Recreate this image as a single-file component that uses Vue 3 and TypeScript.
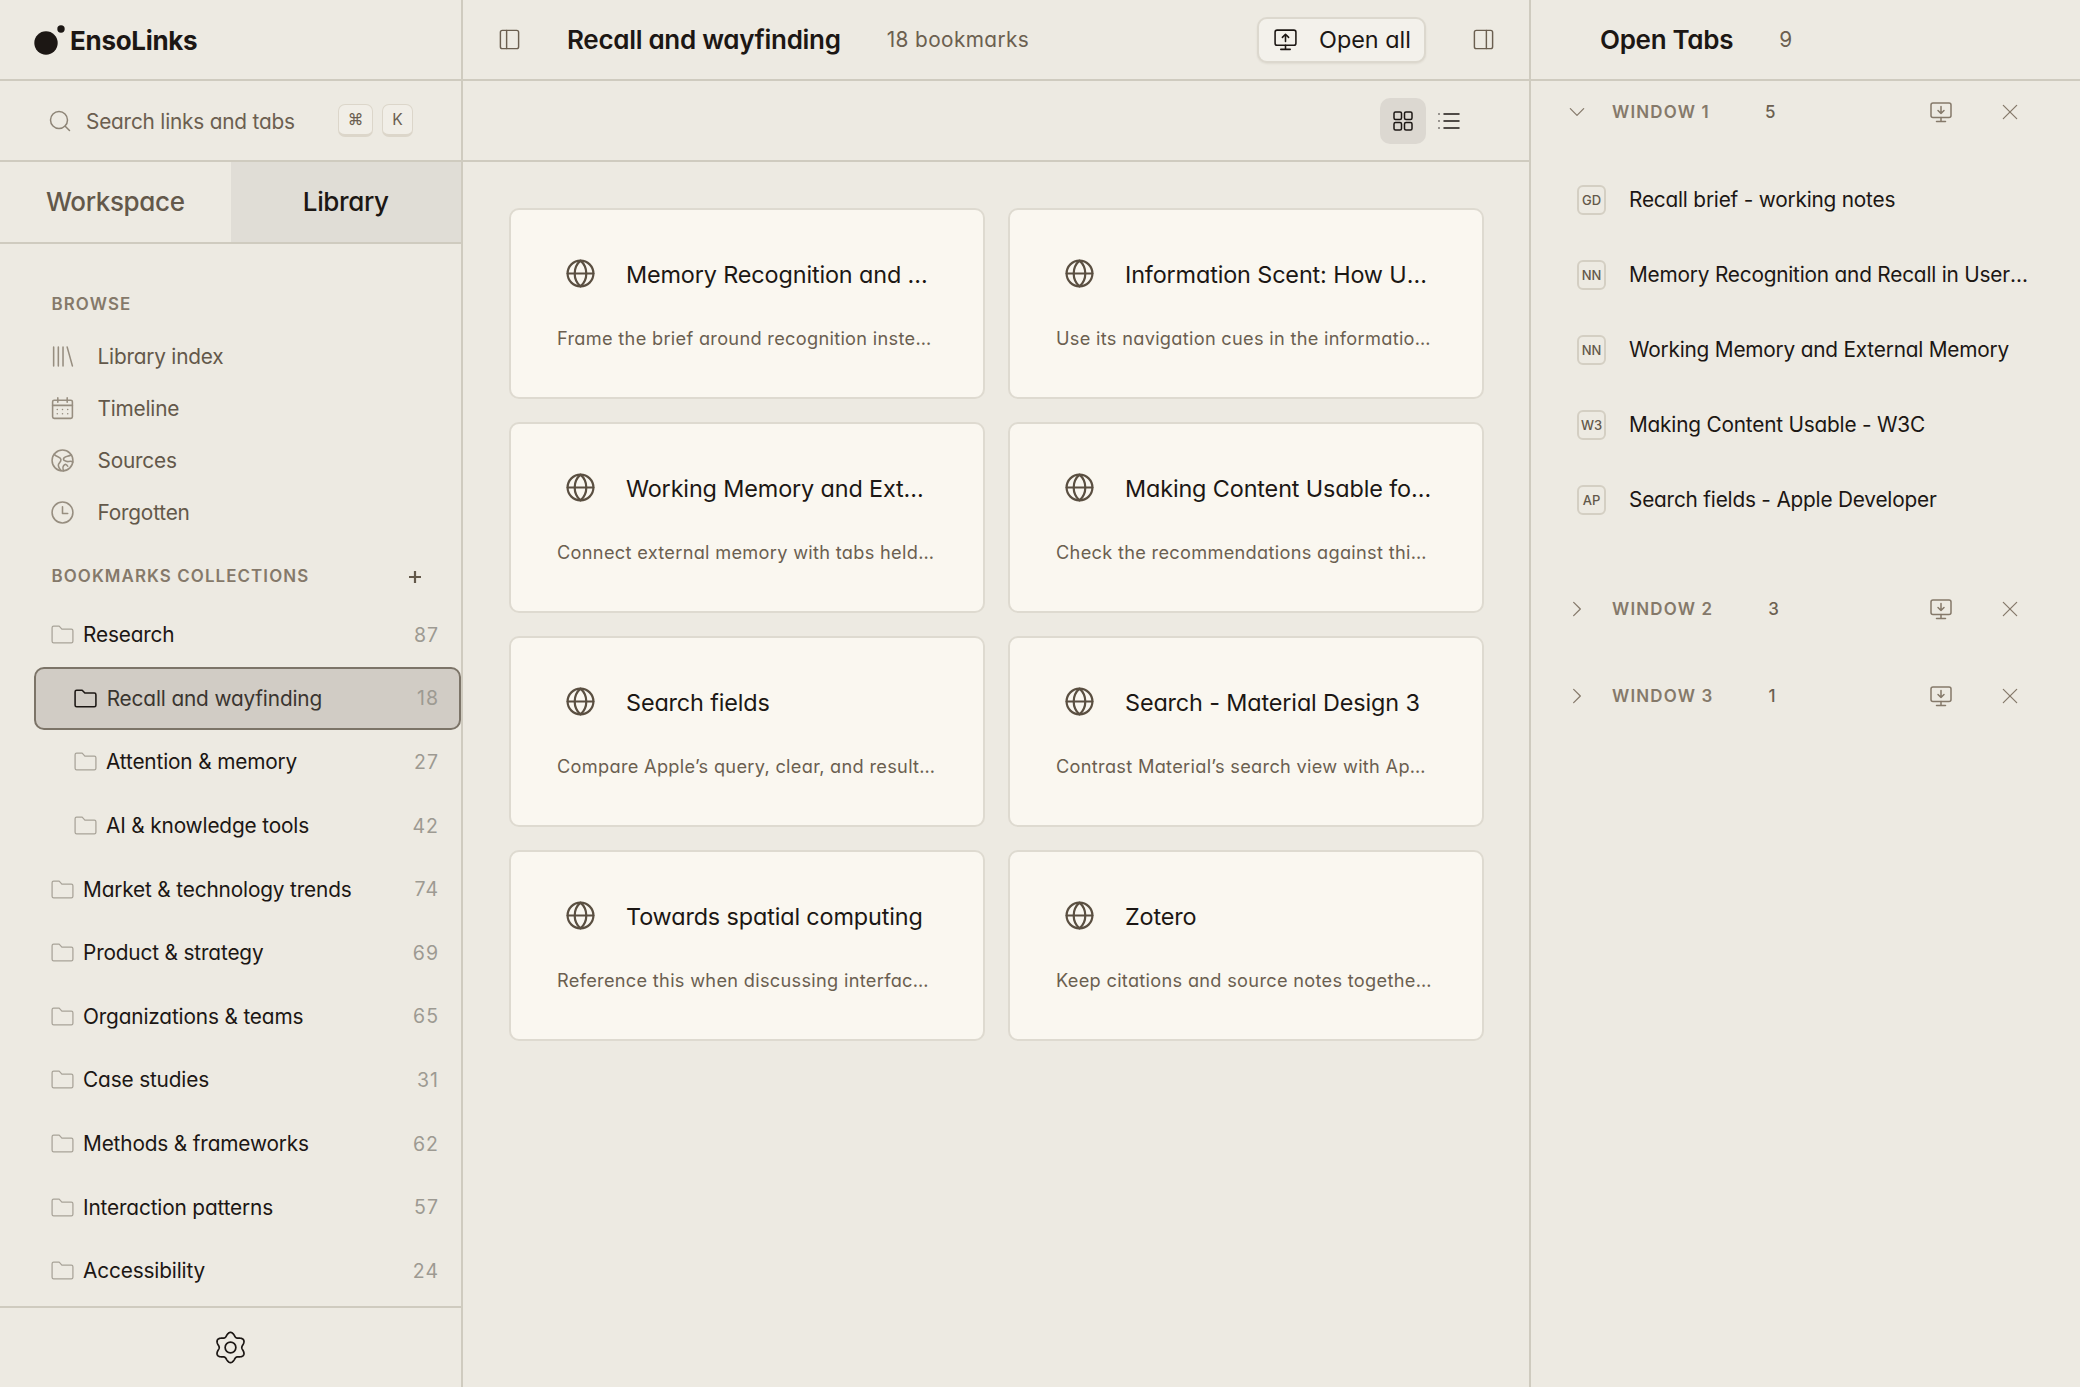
<template>
  <svg class="defs" width="0" height="0" aria-hidden="true">
    <symbol id="i-search" viewBox="0 0 24 24"><circle cx="11" cy="11" r="8.5" /><path d="M17.2 17.2 21.5 21.5" /></symbol>
    <symbol id="i-books" viewBox="0 0 24 24"><path d="M3.500 3v18M8 3v18M12.500 3v18M16.500 3l5 18" /></symbol>
    <symbol id="i-cal" viewBox="0 0 24 24"><rect x="2.5" y="4" width="19" height="17.5" rx="1.5" /><path d="M2.5 9h19M7.5 1.8V6M16.5 1.8V6" /><path d="M7 13h.01M12 13h.01M17 13h.01M7 17h.01M12 17h.01M17 17h.01" stroke-width="1.5" /></symbol>
    <symbol id="i-earth" viewBox="0 0 24 24"><circle cx="12" cy="12" r="10" /><path d="M4 6c2 3 6 2 6.500 5s-3 3-2.500 6 2 3.500 2.500 4.500M20.500 6.500c-3 2-5 1-7 3s2 4 4.500 3.500 3.500 0 4 .5M13 22c-.5-2-1.500-3 0-5s3-1.500 4 .5" /></symbol>
    <symbol id="i-clock" viewBox="0 0 24 24"><circle cx="12" cy="12" r="10" /><path d="M12 6.500V13h5" /></symbol>
    <symbol id="i-folder" viewBox="0 0 24 24"><path d="M2 5.500A1.500 1.500 0 0 1 3.500 4h5.300l2.600 2.800h9.100A1.500 1.500 0 0 1 22 8.300v10.200a1.500 1.500 0 0 1-1.500 1.500h-17A1.500 1.500 0 0 1 2 18.500z" /></symbol>
    <symbol id="i-gear" viewBox="0 0 24 24"><circle cx="12" cy="12" r="3.900" /><path :d="gearPath" /></symbol>
    <symbol id="i-panel-l" viewBox="0 0 24 24"><rect x="2.500" y="2.500" width="19" height="19" rx="2" /><path d="M9 2.500v19" /></symbol>
    <symbol id="i-panel-r" viewBox="0 0 24 24"><rect x="2.500" y="2.500" width="19" height="19" rx="2" /><path d="M15 2.500v19" /></symbol>
    <symbol id="i-up" viewBox="0 0 24 24"><rect x="2" y="3" width="20" height="14.500" rx="2" /><path d="M12 21.500v-4M7.500 21.500h9M12 14V7M9 10l3-3 3 3" /></symbol>
    <symbol id="i-down" viewBox="0 0 24 24"><rect x="2" y="3" width="20" height="14.500" rx="2" /><path d="M12 21.500v-4M7.500 21.500h9M12 6.500v7M9 10.500l3 3 3-3" /></symbol>
    <symbol id="i-grid" viewBox="0 0 24 24"><rect x="3" y="3" width="7.500" height="7.500" rx="1.500" /><rect x="13.500" y="3" width="7.500" height="7.500" rx="1.500" /><rect x="3" y="13.500" width="7.500" height="7.500" rx="1.500" /><rect x="13.500" y="13.500" width="7.500" height="7.500" rx="1.500" /></symbol>
    <symbol id="i-list" viewBox="0 0 24 24"><path d="M7 5h15M7 12h15M7 19h15M2 5h.01M2 12h.01M2 19h.01" /></symbol>
    <symbol id="i-globe" viewBox="0 0 24 24"><circle cx="12" cy="12" r="10" /><path d="M2 12h20M12 2c3.500 3 4.500 6.500 4.500 10s-1 7-4.500 10c-3.500-3-4.500-6.500-4.500-10S8.500 5 12 2z" /></symbol>
    <symbol id="i-x" viewBox="0 0 24 24"><path d="M4 4l16 16M20 4 4 20" /></symbol>
    <symbol id="i-chev-d" viewBox="0 0 24 24"><path d="M4 8l8 8 8-8" /></symbol>
    <symbol id="i-chev-r" viewBox="0 0 24 24"><path d="M8 4l8 8-8 8" /></symbol>
  </svg>

  <div class="app">
    <aside class="side">
      <div class="brand">
        <svg class="logo" viewBox="0 0 32 32"><circle cx="13" cy="19" r="11.700" /><circle cx="28" cy="5" r="3.700" /></svg>
        <span>EnsoLinks</span>
      </div>
      <div class="search">
        <svg class="ic search-ic"><use href="#i-search" /></svg>
        <span class="search-text">Search links and tabs</span>
        <kbd class="key key-cmd">⌘</kbd>
        <kbd class="key">K</kbd>
      </div>
      <div class="tabs">
        <div class="tab">Workspace</div>
        <div class="tab tab-on">Library</div>
      </div>
      <div class="side-body">
        <div class="label browse">BROWSE</div>
        <div v-for="b in browse" :key="b.name" class="browse-row">
          <svg class="ic browse-ic"><use :href="b.icon" /></svg>
          <span>{{ b.name }}</span>
        </div>
        <div class="label coll-head">
          <span>BOOKMARKS COLLECTIONS</span>
          <svg class="plus" viewBox="0 0 14 14"><path d="M7 1v12M1 7h12" /></svg>
        </div>
        <div
          v-for="c in collections"
          :key="c.name"
          class="coll"
          :class="{ 'coll-sub': c.sub, 'coll-on': c.on }"
        >
          <svg class="ic folder"><use href="#i-folder" /></svg>
          <span class="coll-name">{{ c.name }}</span>
          <span class="coll-n">{{ c.n }}</span>
        </div>
      </div>
      <div class="side-foot">
        <svg class="ic gear"><use href="#i-gear" /></svg>
      </div>
    </aside>

    <main class="main">
      <header class="main-head">
        <svg class="ic panel"><use href="#i-panel-l" /></svg>
        <h1 class="title">Recall and wayfinding</h1>
        <span class="count">18 bookmarks</span>
        <button class="open-all">
          <svg class="ic open-ic"><use href="#i-up" /></svg>
          <span>Open all</span>
        </button>
        <svg class="ic panel panel-r"><use href="#i-panel-r" /></svg>
      </header>
      <div class="toolbar">
        <button class="view view-on"><svg class="ic view-ic"><use href="#i-grid" /></svg></button>
        <button class="view"><svg class="ic view-ic"><use href="#i-list" /></svg></button>
      </div>
      <div class="cards">
        <article v-for="c in cards" :key="c.title" class="card">
          <div class="card-top">
            <svg class="ic globe"><use href="#i-globe" /></svg>
            <div class="card-title">{{ c.title }}</div>
          </div>
          <div class="card-desc">{{ c.desc }}</div>
        </article>
      </div>
    </main>

    <aside class="right">
      <header class="right-head">
        <h2 class="right-title">Open Tabs</h2>
        <span class="right-n">9</span>
      </header>
      <section v-for="w in windows" :key="w.name" class="win">
        <div class="win-head">
          <svg class="ic chev"><use :href="w.tabs.length ? '#i-chev-d' : '#i-chev-r'" /></svg>
          <span class="win-name">{{ w.name }}</span>
          <span class="win-n">{{ w.n }}</span>
          <svg class="ic win-dl"><use href="#i-down" /></svg>
          <svg class="ic win-x"><use href="#i-x" /></svg>
        </div>
        <div v-if="w.tabs.length" class="win-tabs">
          <div v-for="t in w.tabs" :key="t.title" class="win-tab">
            <span class="badge">{{ t.badge }}</span>
            <span class="win-tab-title">{{ t.title }}</span>
          </div>
        </div>
      </section>
    </aside>
  </div>
</template>

<script setup lang="ts">
// six round lobes around the centre, one pointing straight up
const gearPath = Array.from({ length: 144 }, (_, i) => {
  const a = (i / 144) * Math.PI * 2
  const r = 9.6 + 1.4 * Math.cos(6 * a)
  const x = 12 + r * Math.sin(a)
  const y = 12 - r * Math.cos(a)
  return `${i ? 'L' : 'M'}${x.toFixed(2)} ${y.toFixed(2)}`
}).join('') + 'Z'

const browse = [
  { name: 'Library index', icon: '#i-books' },
  { name: 'Timeline', icon: '#i-cal' },
  { name: 'Sources', icon: '#i-earth' },
  { name: 'Forgotten', icon: '#i-clock' },
]

const collections = [
  { name: 'Research', n: 87 },
  { name: 'Recall and wayfinding', n: 18, sub: true, on: true },
  { name: 'Attention & memory', n: 27, sub: true },
  { name: 'AI & knowledge tools', n: 42, sub: true },
  { name: 'Market & technology trends', n: 74 },
  { name: 'Product & strategy', n: 69 },
  { name: 'Organizations & teams', n: 65 },
  { name: 'Case studies', n: 31 },
  { name: 'Methods & frameworks', n: 62 },
  { name: 'Interaction patterns', n: 57 },
  { name: 'Accessibility', n: 24 },
]

const cards = [
  { title: 'Memory Recognition and Recall in User Interfaces', desc: 'Frame the brief around recognition instead of recall.' },
  { title: 'Information Scent: How Users Decide', desc: 'Use its navigation cues in the information architecture.' },
  { title: 'Working Memory and External Memory', desc: 'Connect external memory with tabs held open by readers.' },
  { title: 'Making Content Usable for People', desc: 'Check the recommendations against this reference list.' },
  { title: 'Search fields', desc: 'Compare Apple’s query, clear, and results behaviours here.' },
  { title: 'Search - Material Design 3', desc: 'Contrast Material’s search view with Apple’s search fields.' },
  { title: 'Towards spatial computing', desc: 'Reference this when discussing interface futures and space.' },
  { title: 'Zotero', desc: 'Keep citations and source notes together in one library.' },
]

const windows = [
  {
    name: 'WINDOW 1',
    n: 5,
    tabs: [
      { badge: 'GD', title: 'Recall brief - working notes' },
      { badge: 'NN', title: 'Memory Recognition and Recall in User Interfaces' },
      { badge: 'NN', title: 'Working Memory and External Memory' },
      { badge: 'W3', title: 'Making Content Usable - W3C' },
      { badge: 'AP', title: 'Search fields - Apple Developer' },
    ],
  },
  { name: 'WINDOW 2', n: 3, tabs: [] },
  { name: 'WINDOW 3', n: 1, tabs: [] },
]
</script>

<style>
html, body { margin: 0; background: #edeae2; }
</style>

<style scoped>
.defs { position: absolute; }
.app {
  display: flex;
  height: 1387px;
  width: 2080px;
  overflow: hidden;
  background: #edeae2;
  color: #1c1714;
  font-family: Inter, "Liberation Sans", sans-serif;
  font-feature-settings: "cv11" 1;
}
.ic {
  fill: none;
  stroke: currentColor;
  stroke-width: 1.5;
  stroke-linecap: round;
  stroke-linejoin: round;
  flex: none;
}

/* sidebar */
.side {
  width: 463px;
  box-sizing: border-box;
  flex: none;
  display: flex;
  flex-direction: column;
  border-right: 2px solid #cfcbbf;
}
.brand {
  box-sizing: border-box;
  flex: none;
  display: flex;
  align-items: center;
  gap: 5px;
  padding: 2px 0 0 33px;
  border-bottom: 2px solid #cfcbbf;
  height: 81px;
  font-size: 26px;
  font-weight: 700;
  letter-spacing: -.3px;
}
.logo { width: 32px; height: 32px; fill: #1c1714; margin-top: -2px; }
.search {
  height: 81px;
  box-sizing: border-box;
  flex: none;
  display: flex;
  align-items: center;
  padding-left: 48px;
  border-bottom: 2px solid #cfcbbf;
  color: #6b5f50;
  font-size: 20.800px;
  letter-spacing: -.2px;
}
.search-ic { width: 24px; height: 24px; color: #8d8476; margin-right: 14px; }
.search-text { width: 252px; padding-top: 1px; }
.key {
  box-sizing: border-box;
  height: 33px;
  min-width: 31px;
  padding: 0 8px;
  display: flex;
  align-items: center;
  justify-content: center;
  border: 1px solid #dcd6ca;
  border-bottom-width: 3px;
  border-radius: 7px;
  background: #f1eee7;
  font-family: inherit;
  font-size: 15.600px;
  color: #6b5f50;
}
.key-cmd { width: 35px; margin-right: 9px; }
.tabs {
  height: 82px;
  box-sizing: border-box;
  flex: none;
  display: flex;
  border-bottom: 2px solid #cfcbbf;
}
.tab {
  flex: 1;
  display: flex;
  align-items: center;
  justify-content: center;
  padding-bottom: 1px;
  font-size: 26px;
  font-weight: 500;
  letter-spacing: -.35px;
  color: #63584a;
}
.tab-on { background: #e0ddd6; color: #1c1714; }
.side-body {
  flex: 1;
  min-height: 0;
  padding-top: 49px;
  overflow: hidden;
}
.label {
  font-size: 16.900px;
  font-weight: 600;
  letter-spacing: 1.100px;
  color: #85796a;
  padding-left: 51.500px;
}
.browse { height: 22px; line-height: 22px; margin-bottom: 15px; }
.browse-row {
  height: 52px;
  display: flex;
  align-items: center;
  padding-left: 50px;
  font-size: 20.800px;
  letter-spacing: -.2px;
  color: #63584a;
}
.browse-ic { width: 25px; height: 25px; color: #978e80; margin-right: 22.500px; }
.coll-head {
  display: flex;
  align-items: center;
  justify-content: space-between;
  height: 24px;
  margin-top: 26px;
  margin-bottom: 15px;
  padding-right: 39px;
}
.plus { width: 14px; height: 14px; fill: none; stroke: #63584a; stroke-width: 2.200; margin-top: 2px; }
.coll {
  box-sizing: border-box;
  height: 63.600px;
  display: flex;
  align-items: center;
  padding: 0 22px 0 50px;
  font-size: 20.800px;
  letter-spacing: -.15px;
}
.coll-sub { padding-left: 73px; }
.coll-on {
  margin: .5px 0 .5px 34px;
  padding: 0 20px 0 37px;
  height: 62.600px;
  background: #d1ccc5;
  border: 2px solid #7c7468;
  border-radius: 10px;
  color: #3a3530;
}
.folder { width: 25px; height: 25px; color: #a8a398; margin-right: 8px; stroke-width: 1.200; }
.coll-on .folder { color: #1c1714; stroke-width: 1.500; margin-right: 8.700px; }
.coll-name { flex: 1; }
.coll-n { color: #9d9a92; font-size: 19.500px; letter-spacing: 1px; }
.side-foot {
  height: 81px;
  box-sizing: border-box;
  flex: none;
  border-top: 2px solid #cfcbbf;
  display: flex;
  align-items: center;
  justify-content: center;
}
.gear { width: 33px; height: 33px; color: #1c1714; stroke-width: 1.250; }

/* main */
.main {
  width: 1068px;
  box-sizing: border-box;
  flex: none;
  display: flex;
  flex-direction: column;
  border-right: 2px solid #cfcbbf;
}
.main-head {
  height: 81px;
  box-sizing: border-box;
  flex: none;
  display: flex;
  align-items: center;
  padding: 0 34px 0 34.500px;
  border-bottom: 2px solid #cfcbbf;
}
.panel { width: 23px; height: 23px; color: #6b5f50; }
.panel-r { margin-left: 46px; }
.title { margin: 0 0 0 46.500px; font-size: 26px; font-weight: 600; letter-spacing: -.3px; }
.count { margin-left: 46px; font-size: 20.800px; letter-spacing: .4px; color: #6b5f50; }
.open-all {
  margin-left: auto;
  box-sizing: border-box;
  width: 169px;
  height: 46px;
  display: flex;
  align-items: center;
  padding: 0 0 0 14px;
  background: #f3f1eb;
  border: 2px solid #dcd8ce;
  border-radius: 10px;
  box-shadow: 0 1px 2px rgba(60, 50, 30, .08);
  font-family: inherit;
  font-feature-settings: inherit;
  font-size: 23.400px;
  color: #1c1714;
}
.open-ic { width: 25px; height: 25px; margin-right: 21px; }
.toolbar {
  height: 81px;
  box-sizing: border-box;
  flex: none;
  display: flex;
  align-items: center;
  justify-content: flex-end;
  padding-right: 57px;
  border-bottom: 2px solid #cfcbbf;
}
.view {
  width: 46px;
  height: 46px;
  padding: 0;
  display: flex;
  align-items: center;
  justify-content: center;
  background: none;
  border: none;
  border-radius: 10px;
  color: #1c1714;
}
.view-on { background: #dcd8d1; }
.view-ic { width: 24px; height: 24px; }
.cards {
  display: grid;
  grid-template-columns: 476px 476px;
  grid-auto-rows: 191px;
  gap: 23px;
  padding: 46px 0 0 46px;
}
.card {
  box-sizing: border-box;
  padding: 0 47px 0 46px;
  background: #faf7f0;
  border: 2px solid #dedad0;
  border-radius: 10px;
  display: flex;
  flex-direction: column;
  min-width: 0;
}
.card-top {
  height: 64px;
  margin-top: 32px;
  display: flex;
  align-items: center;
}
.globe { width: 31px; height: 31px; color: #5a4f41; margin-left: 7.500px; margin-right: 30.500px; margin-top: -2px; stroke-width: 1.700; }
.card-title {
  flex: 1;
  min-width: 0;
  font-size: 23.400px;
  letter-spacing: -.13px;
  white-space: nowrap;
  overflow: hidden;
  text-overflow: ellipsis;
}
.card-desc {
  margin-top: 21px;
  font-size: 18.200px;
  letter-spacing: .3px;
  color: #6b5f50;
  white-space: nowrap;
  overflow: hidden;
  text-overflow: ellipsis;
}

/* right */
.right { flex: 1; min-width: 0; }
.right-head {
  height: 81px;
  box-sizing: border-box;
  display: flex;
  align-items: center;
  padding-left: 69px;
  border-bottom: 2px solid #cfcbbf;
}
.right-title { margin: 0; font-size: 26px; font-weight: 600; letter-spacing: -.3px; }
.right-n { margin-left: 46px; font-size: 20.800px; color: #6b5f50; }
.win { margin-bottom: 25px; }
.win-head {
  height: 62px;
  display: flex;
  align-items: center;
  padding: 0 60px 0 36px;
  color: #85796a;
}
.chev { width: 20px; height: 20px; margin-right: 25px; }
.win-name { font-size: 16.900px; font-weight: 600; letter-spacing: 1.200px; }
.win-n { font-size: 16.900px; font-weight: 500; color: #6b5f50; margin-left: 55px; }
.win-dl { width: 24px; height: 24px; margin-left: auto; margin-right: 47px; }
.win-x { width: 20px; height: 20px; }
.win-tabs { padding: 19px 0 16px; }
.win-tab {
  height: 75px;
  display: flex;
  align-items: center;
  padding-left: 46px;
  font-size: 20.800px;
  letter-spacing: -.2px;
}
.badge {
  box-sizing: border-box;
  width: 29px;
  height: 30px;
  flex: none;
  display: flex;
  align-items: center;
  justify-content: center;
  border: 2px solid #d4cfc3;
  border-radius: 6px;
  font-size: 13px;
  font-weight: 500;
  letter-spacing: 0;
  color: #63584a;
  margin-right: 23px;
}
.win-tab-title {
  width: 402px;
  white-space: nowrap;
  overflow: hidden;
  text-overflow: ellipsis;
}
</style>
